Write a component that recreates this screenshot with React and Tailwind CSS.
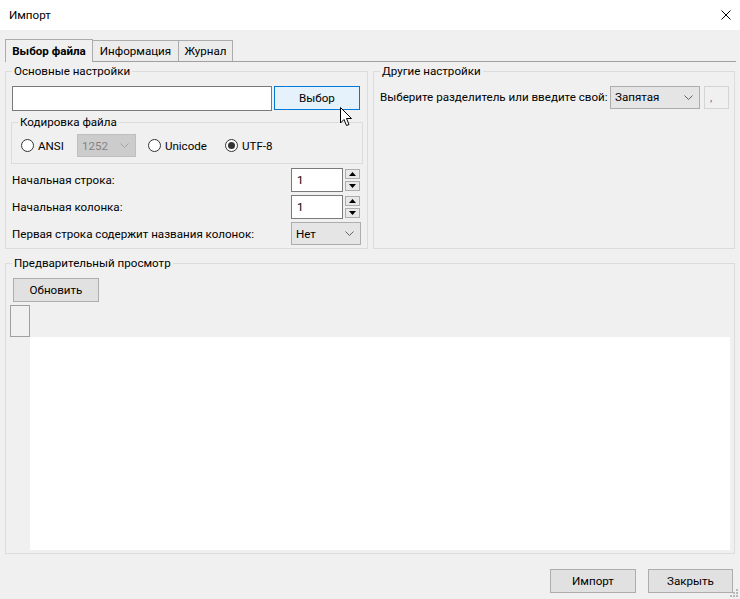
import React from 'react';

const Chevron = ({ className = '' }) => (
  <svg width="9" height="5" viewBox="0 0 9 5" className={className}>
    <path d="M0.5 0.5 L4.5 4.5 L8.5 0.5" fill="none" stroke="currentColor" strokeWidth="1" />
  </svg>
);

const Radio = ({ checked, label }) => (
  <label className="flex items-center gap-[4px]">
    <span className="w-[13px] h-[13px] rounded-full border border-[#333333] bg-white flex items-center justify-center">
      {checked && <span className="w-[7px] h-[7px] rounded-full bg-[#333333]" />}
    </span>
    <span>{label}</span>
  </label>
);

const SpinBox = ({ value }) => (
  <div className="flex items-center gap-[2px]">
    <div className="w-[52px] h-[24px] border border-[#7a7a7a] bg-white flex items-center pl-[5px]">{value}</div>
    <div className="flex flex-col gap-[2px]">
      <div className="w-[15px] h-[10px] border border-[#adadad] bg-[#e8e8e8] flex items-center justify-center">
        <svg width="7" height="4" viewBox="0 0 7 4"><path d="M0 4 L3.5 0 L7 4 Z" fill="#000" /></svg>
      </div>
      <div className="w-[15px] h-[10px] border border-[#adadad] bg-[#e8e8e8] flex items-center justify-center">
        <svg width="7" height="4" viewBox="0 0 7 4"><path d="M0 0 L3.5 4 L7 0 Z" fill="#000" /></svg>
      </div>
    </div>
  </div>
);

const Legend = ({ children }) => (
  <legend className="ml-[6px] px-[2px] leading-[16px]">{children}</legend>
);

export default function App() {
  return (
    <div className="relative w-[740px] h-[599px] bg-[#f0f0f0] flex flex-col text-[11.6px] leading-[16px] text-black font-['Roboto',sans-serif] overflow-hidden">
      {/* title bar */}
      <div className="h-[30px] bg-white flex items-center justify-between pl-[9px] pr-[9px] shrink-0">
        <span>Импорт</span>
        <svg width="10" height="10" viewBox="0 0 10 10">
          <path d="M0.5 0.5 L9.5 9.5 M9.5 0.5 L0.5 9.5" stroke="#000" strokeWidth="1" />
        </svg>
      </div>

      {/* tabs */}
      <div className="mt-[9px] ml-[5px] mr-[4px] h-[23px] flex items-end border-b border-[#a0a0a0] shrink-0">
        <div className="w-[88px] h-[23px] -mb-px border border-b-0 border-[#acacac] bg-[#f0f0f0] font-bold flex items-center justify-center">
          Выбор файла
        </div>
        <div className="w-[87px] h-[21px] -ml-px border border-b-0 border-[#acacac] bg-[#ececec] flex items-center justify-center">
          Информация
        </div>
        <div className="w-[55px] h-[21px] -ml-px border border-b-0 border-[#acacac] bg-[#ececec] flex items-center justify-center">
          Журнал
        </div>
      </div>

      {/* tab page */}
      <div className="flex flex-col px-[5px] pt-[1px]">
        <div className="flex gap-[5px]">
          <fieldset className="w-[363px] h-[186px] border border-[#dcdcdc]">
            <Legend>Основные настройки</Legend>
            <div className="flex flex-col pl-[5px]">
              <div className="mt-[7px] ml-[1px] flex gap-[2px]">
                <div className="w-[260px] h-[25px] border border-[#7a7a7a] bg-white" />
                <div className="w-[86px] h-[24px] border border-[#0078d7] bg-[#e5f1fb] flex items-center justify-center">
                  Выбор
                </div>
              </div>

              <fieldset className="mt-[3px] w-[352px] h-[50px] border border-[#dcdcdc]">
                <Legend>Кодировка файла</Legend>
                <div className="mt-[4px] pl-[9px] flex items-center h-[23px]">
                  <Radio label="ANSI" />
                  <div className="ml-[13px] w-[59px] h-[23px] border border-[#bfbfbf] bg-[#cccccc] text-[#838383] flex items-center justify-between pl-[4px] pr-[6px]">
                    <span>1252</span>
                    <Chevron className="text-[#a6a6a6]" />
                  </div>
                  <div className="ml-[12px]"><Radio label="Unicode" /></div>
                  <div className="ml-[18px]"><Radio checked label="UTF-8" /></div>
                </div>
              </fieldset>

              <div className="mt-[4px] ml-[1px] flex items-center h-[24px]">
                <span className="w-[279px]">Начальная строка:</span>
                <SpinBox value="1" />
              </div>
              <div className="mt-[3px] ml-[1px] flex items-center h-[24px]">
                <span className="w-[279px]">Начальная колонка:</span>
                <SpinBox value="1" />
              </div>
              <div className="mt-[3px] ml-[1px] flex items-center h-[23px]">
                <span className="w-[279px] whitespace-nowrap">Первая строка содержит названия колонок:</span>
                <div className="w-[70px] h-[23px] border border-[#adadad] bg-[#e5e5e5] flex items-center justify-between pl-[4px] pr-[6px]">
                  <span>Нет</span>
                  <Chevron className="text-[#606060]" />
                </div>
              </div>
            </div>
          </fieldset>

          <fieldset className="w-[362px] h-[186px] border border-[#dcdcdc]">
            <Legend>Другие настройки</Legend>
            <div className="mt-[6px] pl-[6px] flex items-center h-[24px]">
              <span className="w-[230px] whitespace-nowrap">Выберите разделитель или введите свой:</span>
              <div className="w-[90px] h-[23px] border border-[#adadad] bg-[#e5e5e5] flex items-center justify-between pl-[4px] pr-[6px]">
                <span>Запятая</span>
                <Chevron className="text-[#606060]" />
              </div>
              <div className="ml-[4px] w-[25px] h-[23px] border border-[#d4d4d4] bg-[#f0f0f0] flex items-center pl-[5px] text-[#6d6d8e]">
                ,
              </div>
            </div>
          </fieldset>
        </div>

        <fieldset className="mt-[6px] w-[730px] h-[299px] border border-[#dcdcdc]">
          <Legend>Предварительный просмотр</Legend>
          <div className="flex flex-col pl-[6px]">
            <div className="mt-[7px] ml-[1px] w-[86px] h-[24px] border border-[#adadad] bg-[#e1e1e1] flex items-center justify-center">
              Обновить
            </div>
            <div className="mt-[3px] ml-[-2px] w-[720px] h-[245px] flex flex-col">
              <div className="h-[32px] flex">
                <div className="w-[20px] h-[32px] border border-[#a0a0a0] bg-[#f0f0f0]" />
              </div>
              <div className="flex-1 flex">
                <div className="w-[20px]" />
                <div className="flex-1 bg-white" />
              </div>
            </div>
          </div>
        </fieldset>
      </div>

      {/* bottom buttons */}
      <div className="mt-[15px] pr-[7px] flex justify-end gap-[12px]">
        <div className="w-[86px] h-[24px] border border-[#adadad] bg-[#e1e1e1] flex items-center justify-center">
          Импорт
        </div>
        <div className="w-[85px] h-[24px] border border-[#adadad] bg-[#e1e1e1] flex items-center justify-center">
          Закрыть
        </div>
      </div>

      {/* mouse cursor over the button */}
      <svg width="13" height="20" viewBox="0 0 13 20" className="absolute left-[340px] top-[107px]">
        <path d="M0.5 0.5 L0.5 16 L4 12.5 L6.5 18.5 L9 17.5 L6.5 11.5 L11.5 11.5 Z" fill="#fff" stroke="#000" strokeWidth="1" strokeLinejoin="round" />
      </svg>

      {/* size grip */}
      <svg width="10" height="10" viewBox="0 0 10 10" className="absolute right-[1px] bottom-[1px]">
        <rect x="7" y="1" width="2" height="2" fill="#b8b8b8" />
        <rect x="4" y="4" width="2" height="2" fill="#b8b8b8" />
        <rect x="7" y="4" width="2" height="2" fill="#b8b8b8" />
        <rect x="1" y="7" width="2" height="2" fill="#b8b8b8" />
        <rect x="4" y="7" width="2" height="2" fill="#b8b8b8" />
        <rect x="7" y="7" width="2" height="2" fill="#b8b8b8" />
      </svg>
    </div>
  );
}
